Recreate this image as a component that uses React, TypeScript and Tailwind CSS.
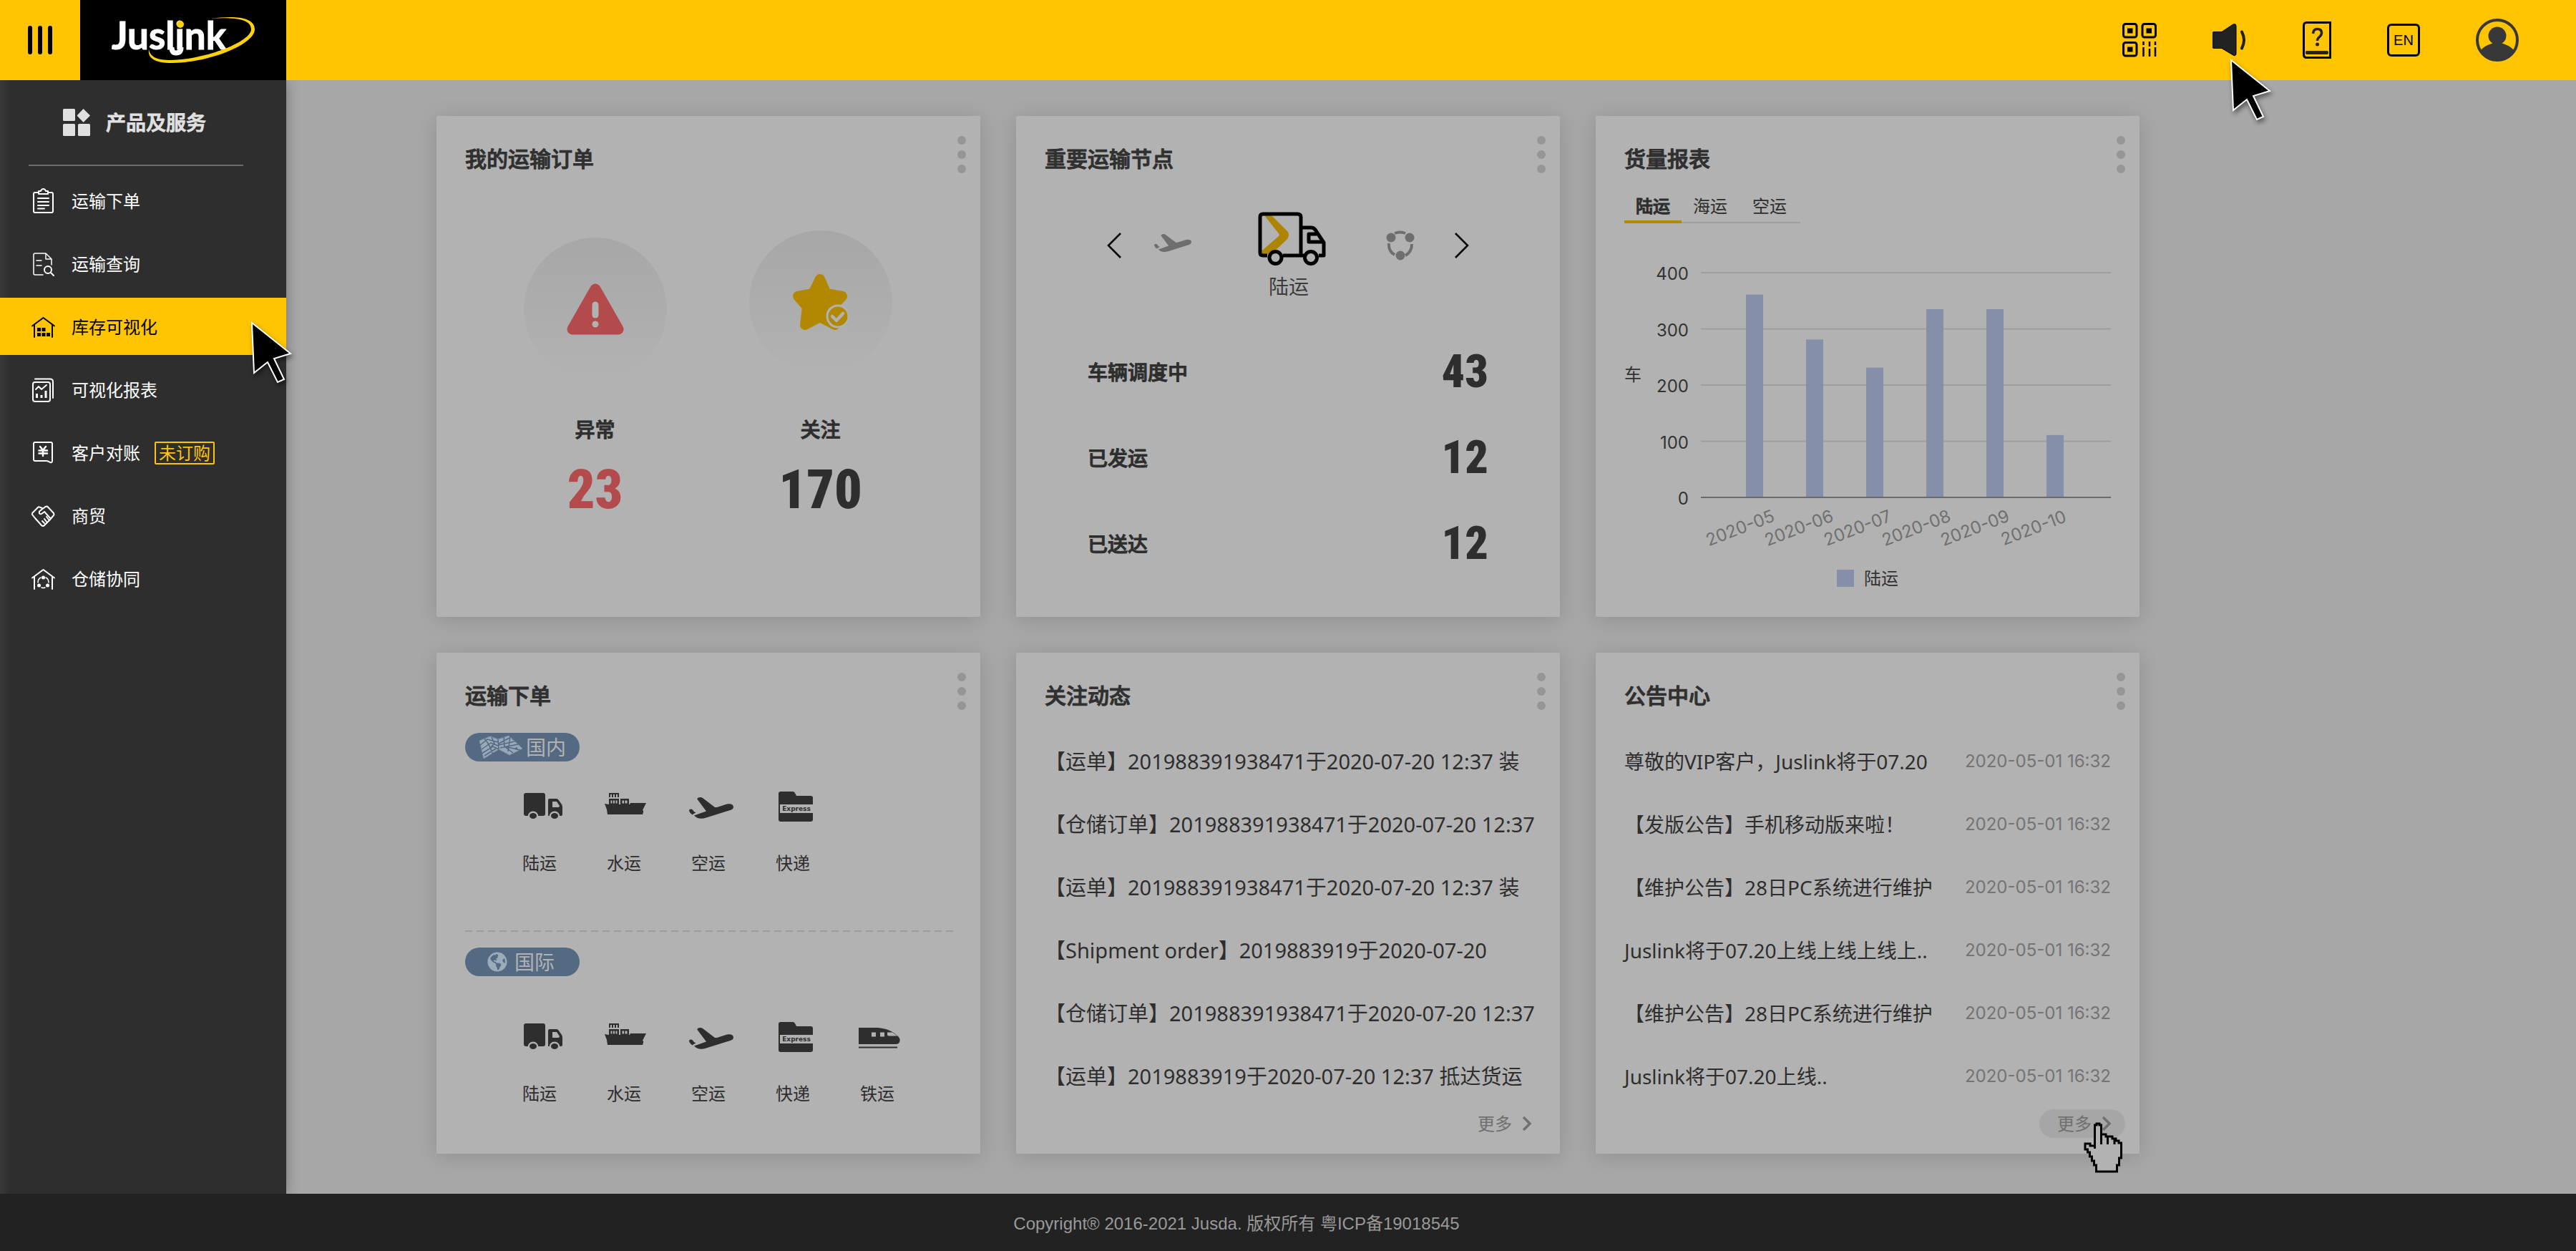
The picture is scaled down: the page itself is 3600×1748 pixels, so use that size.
import type { ReactNode } from "react";
import { FaGlobeAmericas } from "react-icons/fa";

const INK = "#2e2e2e";
const CARD = "#b2b2b2";

/* ---------- header icons ---------- */

function Logo() {
  return (
    <svg viewBox="0 0 288 112" className="h-28 w-72" role="img" aria-label="Juslink">
      <text x="44" y="69" fontSize="53" fontWeight="700" fill="#fff" stroke="#fff" fontFamily="Lato, sans-serif">
        Juslink
      </text>
      <path d="M128 66Q128 74 134 74Q141 74 141 66" fill="none" stroke="#fff" strokeWidth="7" />
      <circle cx="140" cy="34" r="5" fill="#ffd20a" />
      <path d="M182 26C214 22 244 23 244 41C244 62 180 88 127 88C106 88 94 82 96 69C98 80 108 84 127 84C176 83 239 58 239 41C239 26 214 24 182 26Z" fill="#ffd20a" />
    </svg>
  );
}

function QrIcon() {
  return (
    <svg viewBox="0 0 48 48" className="size-12" fill="none" stroke="#000" strokeWidth="3" aria-hidden="true">
      <rect x="1.5" y="1.5" width="18.5" height="18.5" rx="3" />
      <rect x="28" y="1.5" width="18.5" height="18.5" rx="3" />
      <rect x="1.5" y="27.5" width="18.5" height="18.5" rx="3" />
      <path d="M7 7.500h7.500v7H7zM33.500 7.500H41v7h-7.500zM7 33.500h7.500v7H7z" fill="#000" stroke="none" />
      <path d="M29.500 26v5M29.500 34v13M38 26v7M38 36v11M46 26v5M46 34v13" strokeWidth="2.500" />
    </svg>
  );
}

function SpeakerIcon() {
  return (
    <svg viewBox="0 0 48 46" className="h-[46px] w-12" aria-hidden="true">
      <path d="M2 11.500H13L28 1.500Q33 -1.500 33 4V41Q33 47 28 43.500L13 34.500H2Q0 34.500 0 32.500V13.500Q0 11.500 2 11.500Z" fill="#222" stroke="#000" />
      <path d="M41 11.500Q47 23 41 34.500" fill="none" stroke="#222" strokeWidth="4" strokeLinecap="round" />
    </svg>
  );
}

function BookIcon() {
  return (
    <svg viewBox="2 0 40 52" className="h-[52px] w-10" aria-hidden="true">
      <path d="M40.500 1.500V50.500H7.500Q3.500 50.500 3.500 46V6Q3.500 1.500 7.500 1.500Z" fill="none" stroke="#000" strokeWidth="3" />
      <path d="M16.500 17Q17 10.500 22.500 10.500Q28.500 10.500 28.500 16Q28.500 19 25.500 21.500Q22.500 24 22.500 27" fill="none" stroke="#222" strokeWidth="3.500" />
      <circle cx="22.500" cy="32" r="2.500" fill="#222" />
      <rect x="6" y="41" width="32" height="5" rx="2" fill="#222" />
    </svg>
  );
}

function AvatarIcon() {
  return (
    <svg viewBox="0 0 60 60" className="size-15" aria-hidden="true">
      <circle cx="30" cy="30" r="28" fill="none" stroke="#383838" strokeWidth="4" />
      <circle cx="30" cy="24" r="12.500" fill="#383838" />
      <path d="M7 44C12 38 19 36 25 34H35C41 36 48 38 53 44C48 54 40 59 30 59C20 59 12 54 7 44Z" fill="#383838" />
    </svg>
  );
}

function ArrowCursor({ className }: { className: string }) {
  return (
    <svg viewBox="0 0 62 92" className={`pointer-events-none absolute z-20 h-[92px] w-[62px] drop-shadow-[2px_4px_3px_rgba(0,0,0,0.45)] ${className}`} aria-hidden="true">
      <path d="M2 3L56 46L33 53L47 82L38 86L24 58L5 73Z" fill="#000" stroke="#fff" strokeWidth="2" />
    </svg>
  );
}

function HandCursor({ className }: { className: string }) {
  return (
    <svg viewBox="0 0 54 71" className={`pointer-events-none absolute z-20 h-[71px] w-[54px] ${className}`} aria-hidden="true">
      <path
        d="M15.500 37V4H18V2H22V4H24.500V17H31V20H40V23H45V26H49V29H52.500V50H49.500V60H46.500V69H17.500V60H14.500V54H11.500V48H8.500V42H5.500V38H2V30H9V33H15.500Z"
        fill={CARD}
        stroke="#000"
        strokeWidth="3"
      />
      <path d="M24.500 17V31M33.500 20V31M43 23V31" fill="none" stroke="#000" strokeWidth="3" />
    </svg>
  );
}

/* ---------- sidebar icons ---------- */

function SideIcon({ children }: { children: ReactNode }) {
  return (
    <svg viewBox="0 0 40 40" className="size-10 shrink-0" fill="none" stroke="currentColor" strokeWidth="2" strokeLinecap="round" strokeLinejoin="round" aria-hidden="true">
      {children}
    </svg>
  );
}

const clipboard = (
  <SideIcon>
    <path d="M14 8H9Q7 8 7 10V34Q7 36 9 36H32Q34 36 34 34V10Q34 8 32 8H27" />
    <path d="M14 6H17Q18 3 20.500 3Q23 3 24 6H27V10H14ZM13 16H28M13 21H28M13 26H28M13 30.500H22" />
  </SideIcon>
);
const docSearch = (
  <SideIcon>
    <path d="M20 35H9Q7 35 7 33V7Q7 5 9 5H24L32 13V21M24 5V13H32M11 15H18M11 22H18" strokeWidth="1.500" />
    <circle cx="27" cy="28" r="5" />
    <path d="M31 32L35 36" />
  </SideIcon>
);
const roof = "M5 18.500L20.500 7L36 18.500M8 17V34M33 17V34";
const warehouse = (
  <SideIcon>
    <path d={roof} />
    <path d="M12 21h5v5h-5zM18.500 21h5v5h-5zM12 28h5v5h-5zM18.500 28h5v5h-5zM25 28h5v5h-5z" fill="currentColor" stroke="none" />
  </SideIcon>
);
const report = (
  <SideIcon>
    <path d="M9 4.500H30Q34 4.500 34 8.500V31" />
    <rect x="6" y="9" width="24" height="27" rx="3" />
    <path d="M10 19L14 15L18 19L25 13" />
    <path d="M11.500 25V31M18 27V31M24 21V31" strokeWidth="3" strokeLinecap="butt" />
  </SideIcon>
);
const bill = (
  <SideIcon>
    <path d="M9 5H31Q33 5 33 7V31Q33 34 30 33Q27 31 25 31H9Q7 31 7 29V7Q7 5 9 5Z" />
    <path d="M16 11L20 16L24 11M20 16V24M14.500 16.500H26M14.500 20.500H26" strokeWidth="2.500" />
  </SideIcon>
);
const handshake = (
  <SideIcon>
    <path d="M19 9L15 7.500Q14 7 13 8L5.500 15.500Q4.500 17 5 18L9 23L18 33Q20 35 22 33L30 25L35 19Q36 18 35 16L27 7.500Q25.500 6 23.500 7L15 13.500Q14 18 18 17L22 14L31 24" />
    <path d="M19 27L22 30M22 24L25 28M25 21L28 25" />
  </SideIcon>
);
const coopHouse = (
  <SideIcon>
    <path d={roof} />
    <path d="M17 18Q13 20 13 25M24 18Q28 20 28 25M18 32Q20.500 33 23 32" strokeWidth="1.500" />
    <g fill="currentColor" stroke="none">
      <circle cx="20.500" cy="18" r="2.500" />
      <circle cx="14.500" cy="29" r="2.500" />
      <circle cx="26.500" cy="29" r="2.500" />
    </g>
  </SideIcon>
);

const menu = [
  { label: "运输下单", icon: clipboard },
  { label: "运输查询", icon: docSearch },
  { label: "库存可视化", icon: warehouse, active: true },
  { label: "可视化报表", icon: report },
  { label: "客户对账", icon: bill, badge: "未订购" },
  { label: "商贸", icon: handshake },
  { label: "仓储协同", icon: coopHouse },
];

/* ---------- transport icons ---------- */

function Truck() {
  return (
    <svg viewBox="0 0 62 48" className="h-12 w-[62px]" fill={INK} aria-hidden="true">
      <rect x="5" y="4" width="30" height="32" rx="3" />
      <path d="M39 14Q39 12 41 12H50Q52 12 53 13L58 20Q59 22 59 24V34Q59 36 57 36H39Z" />
      <path d="M45 16H51L55 22Q55 24 53 24H45Z" fill={CARD} />
      <circle cx="18" cy="37" r="7.500" fill={CARD} />
      <circle cx="48" cy="37" r="7.500" fill={CARD} />
      <ellipse cx="18" cy="36" rx="5" ry="4" />
      <ellipse cx="48" cy="36" rx="5" ry="4" />
    </svg>
  );
}

function Ship() {
  return (
    <svg viewBox="0 0 62 48" className="h-12 w-[62px]" fill={INK} aria-hidden="true">
      <path d="M0 19L6 20H35L36 18H58L53 28Q55 29 54 31L53 34H4L3 27Z" />
      <path d="M6 4h14v6h-2v-4h-2v4h-2v-4h-2v4h-2v-4h-2v4h-2zM6 12h14v8H6zM22 12h12v8H22z" />
      <path d="M8.500 14.500h2v4h-2zM12 14.500h2v4h-2zM15.500 14.500h2v4h-2zM24.500 14.500h2.500v4h-2.500zM28.500 14.500h3v4h-3z" fill={CARD} />
    </svg>
  );
}

const planePath =
  "M12 1Q16 -1 19 1L36 14Q37 14 39 14L53 9.500Q61 8 62 13Q62 16 59 17.500L24 28.500Q13 32 7 25.500Q14 23 24 19.500L12 3.500Q11 2 12 1ZM2 16.500Q4 16 5.500 18Q6 20 9.500 21.500Q6 23 4.500 24.500Q0 21 0 18Q0 17 2 16.500Z";

function Plane() {
  return (
    <svg viewBox="0 0 62 48" className="h-12 w-[62px]" fill={INK} aria-hidden="true">
      <path d={planePath} transform="translate(0 10)" />
    </svg>
  );
}

function Express() {
  return (
    <svg viewBox="0 0 62 48" className="h-12 w-[62px]" fill={INK} aria-hidden="true">
      <path d="M7 5Q7 2 10 2H27Q29 2 30 4L32 8H52Q55 8 55 11V20H9V32H55V41Q55 44 52 44H10Q7 44 7 41Z" />
      <text x="32" y="29" fontSize="9" fontWeight="700" textAnchor="middle" fontFamily="'DejaVu Sans', sans-serif">
        Express
      </text>
    </svg>
  );
}

function Train() {
  return (
    <svg viewBox="0 0 62 48" className="h-12 w-[62px]" fill={INK} aria-hidden="true">
      <path d="M1 10H28Q42 11 51 18L56 22Q60 26 58 30Q57 33 53 33H1ZM1 36.500H55V38.500H1Z" />
      <path d="M19 16.500h6v6h-6zM31 16.500h6v6h-6zM41 16.500h7L55 21.500H43Q41 21.500 41 19.500Z" fill={CARD} />
    </svg>
  );
}

function MapIcon() {
  return (
    <svg viewBox="0 0 62 34" className="h-[34px] w-[62px]" aria-hidden="true">
      <path d="M1 8L16 2L27 6L42 1L61 19L43 28L28 20L7 33Z" fill="#97a8b8" stroke="#7d91a6" />
      <path
        d="M1 15L12 6L27 10M4 20L17 11L27 15M4 26L20 16L28 20M8 29L24 19M8 5L14 13L20 27M18 3L22 12L16 18M27 6L28 20M28 12L43 4M28 14L50 9M35 3L36 16L48 25M30 18L55 13M36 16L58 21M44 2L41 23"
        fill="none"
        stroke="#546a82"
        strokeWidth="1.500"
      />
      <path d="M50 19Q55 14 54 21Z" fill="#546a82" />
    </svg>
  );
}

/* ---------- cards ---------- */

function Card({ title, children }: { title: string; children: ReactNode }) {
  return (
    <section className="min-h-[700px] rounded-xs bg-[#b2b2b2] shadow-[0_4px_30px_rgba(0,0,0,0.14)]">
      <header className="flex items-end justify-between pt-7 pr-5 pl-10">
        <h2 className="text-[30px] leading-10 font-medium text-[#303030] [-webkit-text-stroke:1px]">{title}</h2>
        <button type="button" aria-label={`${title} 菜单`} className="flex flex-col gap-2">
          <span className="size-3 rounded-full bg-[#969696]" />
          <span className="size-3 rounded-full bg-[#969696]" />
          <span className="size-3 rounded-full bg-[#969696]" />
        </button>
      </header>
      {children}
    </section>
  );
}

function Orders() {
  const number = "mt-6 font-['Roboto_Condensed','Open_Sans_Condensed','Noto_Sans_Condensed',Roboto,sans-serif] text-[76px] leading-20 font-black";
  return (
    <Card title="我的运输订单">
      <div className="flex pl-16">
        <div className="flex w-[315px] flex-col items-center">
          <div className="flex h-[290px] items-end">
            <div className="flex size-50 items-center justify-center rounded-full bg-linear-to-b from-[#a7a7a7] to-[#b2b2b2]">
              <svg viewBox="0 0 80 72" className="h-[72px] w-20" aria-hidden="true">
                <path d="M40 8L72 64H8Z" fill="#b34b4c" stroke="#b34b4c" strokeWidth="15" strokeLinejoin="round" />
                <path d="M40 30V44" stroke={CARD} strokeWidth="9" strokeLinecap="round" />
                <circle cx="40" cy="57" r="4.500" fill={CARD} />
              </svg>
            </div>
          </div>
          <p className="mt-12 text-[28px] leading-10 font-medium text-[#2e2e2e] [-webkit-text-stroke:1px]">异常</p>
          <p className={`${number} text-[#b34b4c]`}>23</p>
        </div>
        <div className="flex w-[315px] flex-col items-center">
          <div className="flex h-[290px] items-end pb-2.5">
            <div className="flex size-50 items-center justify-center rounded-full bg-linear-to-b from-[#a7a7a7] to-[#b2b2b2]">
              <svg viewBox="0 0 80 80" className="size-20" aria-hidden="true">
                <path d="M39 8L48 28L70 32L56 47L60 72L39 61L18 72L21 47L8 32L29 28Z" fill="#b28802" stroke="#b28802" strokeWidth="14" strokeLinejoin="round" />
                <circle cx="64" cy="60" r="15" fill="#b28802" stroke={CARD} strokeWidth="3" />
                <path d="M56 60L62 66L71 56" fill="none" stroke={CARD} strokeWidth="4.500" strokeLinecap="round" strokeLinejoin="round" />
              </svg>
            </div>
          </div>
          <p className="mt-12 text-[28px] leading-10 font-medium text-[#2e2e2e] [-webkit-text-stroke:1px]">关注</p>
          <p className={`${number} text-[#2e2e2e]`}>170</p>
        </div>
      </div>
    </Card>
  );
}

function Nodes() {
  const rows = [
    ["车辆调度中", "43"],
    ["已发运", "12"],
    ["已送达", "12"],
  ];
  return (
    <Card title="重要运输节点">
      <div className="mt-[54px] flex items-start justify-center">
        <button type="button" aria-label="上一个" className="mr-8 flex h-[94px] w-10 items-center justify-center">
          <svg viewBox="0 0 20 36" className="h-9 w-5" fill="none" stroke="#000" strokeWidth="2.500" aria-hidden="true">
            <path d="M19 1L2 18L19 35" />
          </svg>
        </button>
        <button type="button" aria-label="空运" className="mr-20 flex h-[94px] w-15 items-center justify-center">
          <svg viewBox="0 0 62 38" className="h-8 w-[52px]" fill="#6e6e6e" aria-hidden="true">
            <path d={planePath} />
          </svg>
        </button>
        <button type="button" className="flex w-[104px] flex-col items-center text-[28px] leading-10 text-[#3c3c3c]">
          <svg viewBox="-2 0 104 76" className="h-[76px] w-[104px]" fill="none" stroke="#000" strokeWidth="5" strokeLinejoin="round" aria-hidden="true">
            <path d="M16 5H26L48 27Q52 32 48 38L26 59H13V54L36 34Q38 32 35 29Z" fill="#ae8502" stroke="none" />
            <path d="M20 61H14Q10 61 10 57V7Q10 3 14 3H62Q67 3 67 7V61H42M67 22H81Q85 22 87 25L99 43V61H92M74 61H67" />
            <path d="M89 31H78V42H98" />
            <circle cx="31.500" cy="64" r="8.500" />
            <circle cx="81" cy="64" r="8.500" />
          </svg>
          <span className="mt-2">陆运</span>
        </button>
        <button type="button" aria-label="协同" className="mr-9 ml-[74px] flex h-[94px] w-15 items-center justify-center">
          <svg viewBox="0 0 40 42" className="h-[42px] w-10" fill="#6e6e6e" aria-hidden="true">
            <path d="M12 4Q20 1 27 4M4 18Q3 29 12 34M36 19Q36 30 27 35" fill="none" stroke="#6e6e6e" strokeWidth="4" />
            <circle cx="7" cy="10" r="6.500" />
            <circle cx="33" cy="10" r="6.500" />
            <circle cx="20" cy="35" r="6.500" />
          </svg>
        </button>
        <button type="button" aria-label="下一个" className="flex h-[94px] w-10 items-center justify-center">
          <svg viewBox="0 0 20 36" className="h-9 w-5" fill="none" stroke="#000" strokeWidth="2.500" aria-hidden="true">
            <path d="M1 1L18 18L1 35" />
          </svg>
        </button>
      </div>
      <dl className="mt-10 px-[100px]">
        {rows.map(([label, value]) => (
          <div key={label} className="flex h-30 items-center justify-between text-[#2e2e2e]">
            <dt className="text-[28px] leading-10 font-medium [-webkit-text-stroke:1px]">{label}</dt>
            <dd className="font-['Roboto_Condensed','Open_Sans_Condensed','Noto_Sans_Condensed',Roboto,sans-serif] text-[64px] leading-20 font-black">{value}</dd>
          </div>
        ))}
      </dl>
    </Card>
  );
}

function Volume() {
  const ticks = [400, 300, 200, 100, 0];
  const months = [
    { name: "2020-05", value: 361 },
    { name: "2020-06", value: 281 },
    { name: "2020-07", value: 231 },
    { name: "2020-08", value: 335 },
    { name: "2020-09", value: 335 },
    { name: "2020-10", value: 111 },
  ];
  const y = (v: number) => 375 - (v / 400) * 314;
  return (
    <Card title="货量报表">
      <div className="mt-[22px] ml-10 flex text-[24px] leading-10 text-[#2e2e2e]" role="tablist">
        <button type="button" role="tab" aria-selected="true" className="h-12 w-20 border-b-4 border-[#b28802] pt-1 font-medium [-webkit-text-stroke:1px]">
          陆运
        </button>
        <button type="button" role="tab" aria-selected="false" className="h-12 w-20 border-b-2 border-[#a0a0a0] pt-0.5">
          海运
        </button>
        <button type="button" role="tab" aria-selected="false" className="h-12 w-[86px] border-b-2 border-[#a0a0a0] pt-0.5">
          空运
        </button>
      </div>
      <div className="mt-2 px-10">
        <svg viewBox="0 0 680 460" className="w-full font-['Inter']" role="img" aria-label="陆运货量" fontSize="24">
          {ticks.map((t) => (
            <g key={t}>
              <line x1="107" x2="680" y1={y(t)} y2={y(t)} stroke={t ? "#9e9e9e" : "#6a6a6a"} strokeWidth="2" />
              <text x="90" y={y(t) + 10} textAnchor="end" fill="#333">
                {t}
              </text>
            </g>
          ))}
          <text x="0" y="212" fill="#333" fontFamily="'Noto Sans CJK SC', sans-serif">
            车
          </text>
          {months.map((m, i) => (
            <g key={m.name}>
              <rect x={170 + i * 84} y={y(m.value)} width="24" height={374 - y(m.value)} fill="#868fa9" />
              <text transform={`translate(${162 + i * 82} 418) rotate(-21)`} y="8" textAnchor="middle" fill="#707070">
                {m.name}
              </text>
            </g>
          ))}
        </svg>
      </div>
      <div className="flex h-14 items-center justify-center gap-3.5 text-[24px] leading-10 text-[#333]">
        <span className="size-6 bg-[#868fa9]" />
        陆运
      </div>
    </Card>
  );
}

function ModeRow({ modes }: { modes: { label: string; icon: ReactNode }[] }) {
  return (
    <div className="flex pl-[85px]">
      {modes.map((m) => (
        <button key={m.label} type="button" className="flex w-[118px] flex-col items-center gap-[34px] text-[24px] leading-10 text-[#2e2e2e]">
          <span className="pl-2">{m.icon}</span>
          <span>{m.label}</span>
        </button>
      ))}
    </div>
  );
}

function Booking() {
  const modes = [
    { label: "陆运", icon: <Truck /> },
    { label: "水运", icon: <Ship /> },
    { label: "空运", icon: <Plane /> },
    { label: "快递", icon: <Express /> },
  ];
  return (
    <Card title="运输下单">
      <h3 className="mt-8 ml-10 flex h-10 w-40 items-center justify-center gap-1 rounded-full bg-[#546a82] text-[28px] leading-10 text-[#b2b2b2]">
        <MapIcon />
        国内
      </h3>
      <div className="mt-10">
        <ModeRow modes={modes} />
      </div>
      <div className="mt-[74px] mr-[38px] ml-10 h-0.5 bg-[repeating-linear-gradient(90deg,#9c9c9c_0_10px,transparent_10px_16px)]" />
      <h3 className="mt-[22px] ml-10 flex h-10 w-40 items-center justify-center gap-2.5 rounded-full bg-[#546a82] pr-1 text-[28px] leading-10 text-[#b2b2b2]">
        <FaGlobeAmericas className="size-7 text-[#9aabba]" aria-hidden="true" />
        国际
      </h3>
      <div className="mt-[62px]">
        <ModeRow modes={[...modes, { label: "铁运", icon: <Train /> }]} />
      </div>
    </Card>
  );
}

function MoreLink({ hovered = false }: { hovered?: boolean }) {
  return (
    <div className="mt-0.5 flex justify-end pr-5">
      <a href="#more" className={`relative flex h-10 w-30 items-center gap-3.5 rounded-full pl-[25px] text-[24px] leading-10 text-[#707070] ${hovered ? "bg-[#a6a6a6]" : ""}`}>
        更多
        <svg viewBox="0 0 14 22" className="h-[22px] w-3.5" fill="none" stroke="currentColor" strokeWidth="3.500" aria-hidden="true">
          <path d="M2 2L11 11L2 20" />
        </svg>
        {hovered && <HandCursor className="top-[18px] left-[62px]" />}
      </a>
    </div>
  );
}

function Following() {
  const rows = [
    "【运单】201988391938471于2020-07-20 12:37 装",
    "【仓储订单】201988391938471于2020-07-20 12:37",
    "【运单】201988391938471于2020-07-20 12:37 装",
    "【Shipment order】2019883919于2020-07-20",
    "【仓储订单】201988391938471于2020-07-20 12:37",
    "【运单】2019883919于2020-07-20 12:37 抵达货运",
  ];
  return (
    <Card title="关注动态">
      <ul className="mt-7 pl-10">
        {rows.map((r, i) => (
          <li key={i} className="flex h-22 items-center text-[29px] leading-10 whitespace-nowrap text-[#2e2e2e]">
            {r}
          </li>
        ))}
      </ul>
      <MoreLink />
    </Card>
  );
}

function Notices() {
  const rows = [
    "尊敬的VIP客户，Juslink将于07.20",
    "【发版公告】手机移动版来啦！",
    "【维护公告】28日PC系统进行维护",
    "Juslink将于07.20上线上线上线上..",
    "【维护公告】28日PC系统进行维护",
    "Juslink将于07.20上线..",
  ];
  return (
    <Card title="公告中心">
      <ul className="mt-7 px-10">
        {rows.map((r, i) => (
          <li key={i} className="flex h-22 items-center justify-between text-[28px] leading-10 whitespace-nowrap text-[#2e2e2e]">
            {r}
            <time className="font-['Inter'] text-[24px] text-[#747474]">2020-05-01 16:32</time>
          </li>
        ))}
      </ul>
      <MoreLink hovered />
    </Card>
  );
}

/* ---------- page ---------- */

export default function App() {
  return (
    <div className="flex min-h-screen flex-col bg-[#a7a7a7] font-['Noto_Sans','Noto_Sans_CJK_SC',sans-serif]" lang="zh-CN">
      <header className="relative z-10 flex h-28 items-center bg-[#ffc503]">
        <button type="button" aria-label="菜单" className="flex h-28 w-28 items-center justify-center gap-2">
          <span className="h-10 w-1.5 rounded-full bg-black" />
          <span className="h-10 w-1.5 rounded-full bg-black" />
          <span className="h-10 w-1.5 rounded-full bg-black" />
        </button>
        <a href="#home" className="bg-black">
          <Logo />
        </a>
        <nav className="ml-auto flex items-center gap-[78px] pr-20">
          <button type="button" aria-label="二维码">
            <QrIcon />
          </button>
          <button type="button" aria-label="公告" className="relative">
            <SpeakerIcon />
            <ArrowCursor className="top-12 left-6" />
          </button>
          <button type="button" aria-label="帮助">
            <BookIcon />
          </button>
          <button type="button" className="h-[46px] w-[46px] rounded-md border-[3px] border-black font-['Liberation_Sans'] text-[20px] leading-10 text-black">
            EN
          </button>
          <button type="button" aria-label="账户">
            <AvatarIcon />
          </button>
        </nav>
      </header>

      <div className="flex flex-1">
        <aside className="w-100 shrink-0 bg-[#2e2e2e] bg-[linear-gradient(90deg,#393939,transparent_14px)] shadow-[0_0_18px_rgba(0,0,0,0.3)]">
          <h2 className="flex h-[118px] items-center gap-[22px] pl-[88px] text-[28px] leading-10 font-medium text-[#e0e0e0] [-webkit-text-stroke:1px]">
            <svg viewBox="0 0 38 38" className="size-[38px]" fill="#e0e0e0" aria-hidden="true">
              <rect width="17" height="17" rx="1.500" />
              <rect y="21" width="17" height="17" rx="1.500" />
              <rect x="21" y="21" width="17" height="17" rx="1.500" />
              <path d="M28.500 0L38 9.500L28.500 19L19.500 9.500Z" />
            </svg>
            产品及服务
          </h2>
          <hr className="mr-15 ml-10 border-t-2 border-[#6b6b6b]" />
          <ul className="mt-2 flex flex-col gap-2">
            {menu.map((m) => (
              <li key={m.label} className="relative">
                <a href="#menu" className={`flex h-20 items-center gap-5 pt-0.5 pl-10 text-[24px] leading-8 ${m.active ? "bg-[#ffc503] text-black" : "text-white"}`}>
                  {m.icon}
                  {m.label}
                  {m.badge && <span className="flex h-8 items-center rounded-xs border-2 border-[#ffc503] px-1 text-[#ffc503]">{m.badge}</span>}
                </a>
                {m.active && <ArrowCursor className="top-8 left-[350px]" />}
              </li>
            ))}
          </ul>
        </aside>

        <main className="flex-1 pt-[50px] pr-[610px] pb-14 pl-[210px]">
          <div className="grid grid-cols-3 gap-[50px]">
            <Orders />
            <Nodes />
            <Volume />
            <Booking />
            <Following />
            <Notices />
          </div>
        </main>
      </div>

      <footer className="relative z-10 flex h-20 items-center bg-[#222] pt-1 font-['Liberation_Sans','Noto_Sans_CJK_SC',sans-serif]">
        <p className="w-full pr-36 text-center text-[24px] leading-10 text-[#999]">Copyright® 2016-2021 Jusda. 版权所有 粤ICP备19018545</p>
      </footer>
    </div>
  );
}
